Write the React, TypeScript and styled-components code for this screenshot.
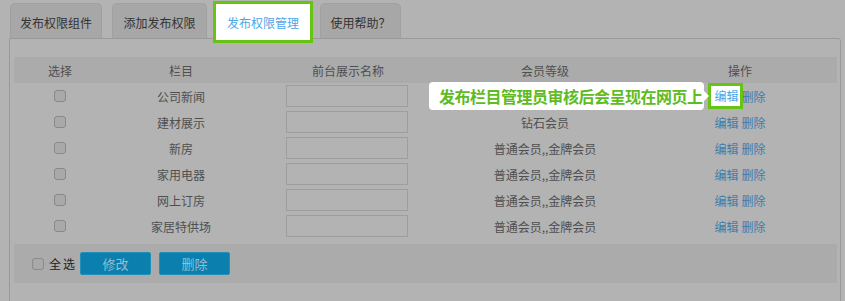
import React from 'react';
import styled, { createGlobalStyle } from 'styled-components';

const GREEN = '#66c414';

const GlobalStyle = createGlobalStyle`
  html, body {
    margin: 0;
    padding: 0;
    background: #b3b3b3;
    font-family: "Noto Sans CJK SC", "Liberation Sans", sans-serif;
    overflow: hidden;
  }
`;

const Page = styled.div`
  padding: 0 4px 0 9px;
  height: 301px;
  box-sizing: border-box;
  overflow: hidden;
`;

const Tabs = styled.div`
  display: flex;
  align-items: flex-start;
  padding-top: 3px;
  padding-left: 1px;
  height: 35px;
`;

const Tab = styled.div<{ $w: number; $gap: number }>`
  width: ${(p) => p.$w}px;
  margin-right: ${(p) => p.$gap}px;
  height: 35px;
  box-sizing: border-box;
  display: flex;
  align-items: center;
  justify-content: center;
  background: #a7a7a7;
  border: 1px solid #a0a0a0;
  border-bottom: none;
  border-radius: 5px 5px 0 0;
  font-size: 12px;
  color: #333;
  padding-top: 2px;
`;

const ActiveTab = styled.div<{ $w: number; $gap: number }>`
  position: relative;
  z-index: 2;
  width: ${(p) => p.$w}px;
  margin-right: ${(p) => p.$gap}px;
  margin-top: -2px;
  margin-bottom: -7px;
  height: 42px;
  box-sizing: border-box;
  display: flex;
  align-items: center;
  justify-content: center;
  background: #fff;
  border: 3px solid ${GREEN};
  font-size: 12px;
  color: #4ea6e6;
  padding-top: 1px;
`;

const Panel = styled.div`
  border: 1px solid #999;
  border-radius: 0 3px 0 0;
  background: #b3b3b3;
  padding: 18px 3px 0 4px;
  height: 280px;
  box-sizing: border-box;
`;

const Grid = styled.div<{ $bg?: string }>`
  display: grid;
  grid-template-columns: 92px 150px 184px 210px 180px 1fr;
  align-items: center;
  height: 26px;
  background: ${(p) => p.$bg || 'transparent'};
  font-size: 12px;
  color: #4f4f4f;
`;

const Cell = styled.div`
  display: flex;
  justify-content: center;
  align-items: center;
  white-space: nowrap;
`;

const Box = styled.span`
  display: inline-block;
  width: 12px;
  height: 12px;
  box-sizing: border-box;
  border: 1px solid #8a8a8a;
  border-radius: 3px;
  background: #a9a9a9;
`;

const NameInput = styled.div`
  width: 122px;
  height: 22px;
  box-sizing: border-box;
  border: 1px solid #9e9e9e;
  background: #b3b3b3;
  margin-left: -3px;
`;

const Links = styled.div`
  display: flex;
  gap: 3px;
  align-items: center;
`;

const Link = styled.span`
  color: #3a7eae;
`;

const HighlightLink = styled.span`
  position: relative;
  z-index: 2;
  display: inline-block;
  background: #fff;
  color: #4aa5e6;
  border: 3px solid ${GREEN};
  padding: 3px 1px 3px 3px;
  margin: -6px -4px -6px -6px;
  line-height: 14px;
`;

const Tip = styled.div`
  position: absolute;
  right: calc(100% + 7px);
  top: 50%;
  transform: translateY(-50%);
  height: 28px;
  display: flex;
  align-items: center;
  padding: 0 2px 0 10px;
  background: #fff;
  border-radius: 4px;
  white-space: nowrap;
  font-size: 16px;
  font-weight: bold;
  letter-spacing: -0.5px;
  color: #5fbb22;

  &::after {
    content: '';
    position: absolute;
    right: -5px;
    top: 50%;
    margin-top: -5px;
    border-style: solid;
    border-width: 5px 0 5px 5px;
    border-color: transparent transparent transparent #fff;
  }
`;

const Footer = styled.div`
  margin-top: 5px;
  height: 39px;
  background: #ababab;
  display: flex;
  align-items: center;
  padding-left: 18px;
`;

const SelectAll = styled.label`
  display: flex;
  align-items: center;
  gap: 5px;
  font-size: 12px;
  color: #222;
  letter-spacing: 2px;
  margin-right: 3px;
`;

const Button = styled.div`
  width: 71px;
  height: 23px;
  box-sizing: border-box;
  margin-right: 8px;
  background: #0b7fae;
  border: 1px solid #2090bb;
  border-radius: 2px;
  color: #93bed2;
  font-size: 13px;
  display: flex;
  align-items: center;
  justify-content: center;
`;

const rows = [
  { name: '公司新闻', level: '' },
  { name: '建材展示', level: '钻石会员' },
  { name: '新房', level: '普通会员,,金牌会员' },
  { name: '家用电器', level: '普通会员,,金牌会员' },
  { name: '网上订房', level: '普通会员,,金牌会员' },
  { name: '家居特供场', level: '普通会员,,金牌会员' },
];

export default function App() {
  return (
    <Page>
      <GlobalStyle />
      <Tabs>
        <Tab $w={92} $gap={10}>发布权限组件</Tab>
        <Tab $w={95} $gap={6}>添加发布权限</Tab>
        <ActiveTab $w={100} $gap={7}>发布权限管理</ActiveTab>
        <Tab $w={81} $gap={0}>使用帮助？</Tab>
      </Tabs>
      <Panel>
        <Grid $bg="#ababab">
          <Cell>选择</Cell>
          <Cell>栏目</Cell>
          <Cell>前台展示名称</Cell>
          <Cell>会员等级</Cell>
          <Cell>操作</Cell>
        </Grid>
        {rows.map((r, i) => (
          <Grid key={r.name}>
            <Cell><Box /></Cell>
            <Cell>{r.name}</Cell>
            <Cell><NameInput /></Cell>
            <Cell>{r.level}</Cell>
            <Cell>
              <Links>
                {i === 0 ? (
                  <HighlightLink>
                    编辑
                    <Tip>发布栏目管理员审核后会呈现在网页上</Tip>
                  </HighlightLink>
                ) : (
                  <Link>编辑</Link>
                )}
                <Link>删除</Link>
              </Links>
            </Cell>
          </Grid>
        ))}
        <Footer>
          <SelectAll><Box />全选</SelectAll>
          <Button>修改</Button>
          <Button>删除</Button>
        </Footer>
      </Panel>
    </Page>
  );
}
